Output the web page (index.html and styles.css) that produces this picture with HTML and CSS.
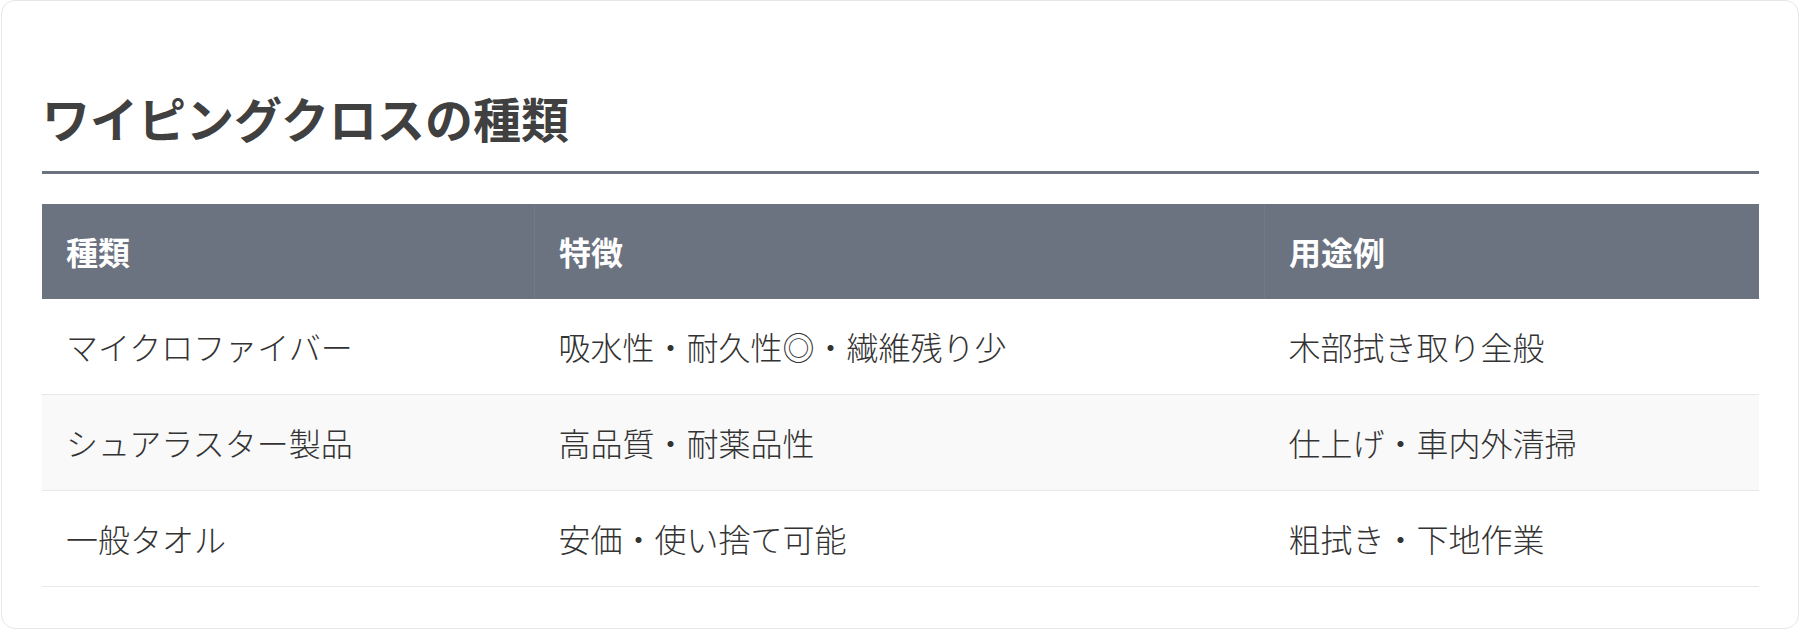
FILE: index.html
```html
<!DOCTYPE html>
<html lang="ja">
<head>
<meta charset="utf-8">
<title>ワイピングクロスの種類</title>
<link rel="stylesheet" href="styles.css">
</head>
<body>
<section class="card">
  <h2 class="card-title">ワイピングクロスの種類</h2>
  <table class="cloth-table">
    <thead>
      <tr>
        <th>種類</th>
        <th>特徴</th>
        <th>用途例</th>
      </tr>
    </thead>
    <tbody>
      <tr>
        <td>マイクロファイバー</td>
        <td>吸水性・耐久性◎・繊維残り少</td>
        <td>木部拭き取り全般</td>
      </tr>
      <tr>
        <td>シュアラスター製品</td>
        <td>高品質・耐薬品性</td>
        <td>仕上げ・車内外清掃</td>
      </tr>
      <tr>
        <td>一般タオル</td>
        <td>安価・使い捨て可能</td>
        <td>粗拭き・下地作業</td>
      </tr>
    </tbody>
  </table>
</section>
</body>
</html>
```

FILE: styles.css
```css
html, body {
  margin: 0;
  padding: 0;
  background: #ffffff;
}

body {
  font-family: "Noto Sans CJK JP", "Noto Sans", sans-serif;
  color: #333333;
}

.card {
  box-sizing: border-box;
  width: 1798px;
  height: 629px;
  margin: 0 0 0 1px;
  padding: 40px 39px 40px 40px;
  border: 1px solid #e6e6e6;
  border-radius: 14px;
  background: #ffffff;
}

.card-title {
  margin: 48px 0 30px;
  padding: 0 0 24px;
  font-size: 48px;
  line-height: 1.2;
  font-weight: 700;
  color: #404040;
  border-bottom: 3px solid #6b7280;
}

.cloth-table {
  width: 100%;
  border-collapse: collapse;
  font-size: 32px;
}

.cloth-table th {
  background: #6b7280;
  color: #ffffff;
  font-weight: 700;
  text-align: left;
  padding: 24px 24px;
  line-height: 47px;
  border-left: 1px solid #737a87;
}

.cloth-table th:first-child {
  border-left: none;
}

.cloth-table td {
  padding: 24px 24px;
  line-height: 47px;
  font-weight: 300;
  color: #333333;
  border-bottom: 1px solid #e8e8e8;
}

.cloth-table tbody tr:nth-child(even) td {
  background: #f9f9f9;
}
```
